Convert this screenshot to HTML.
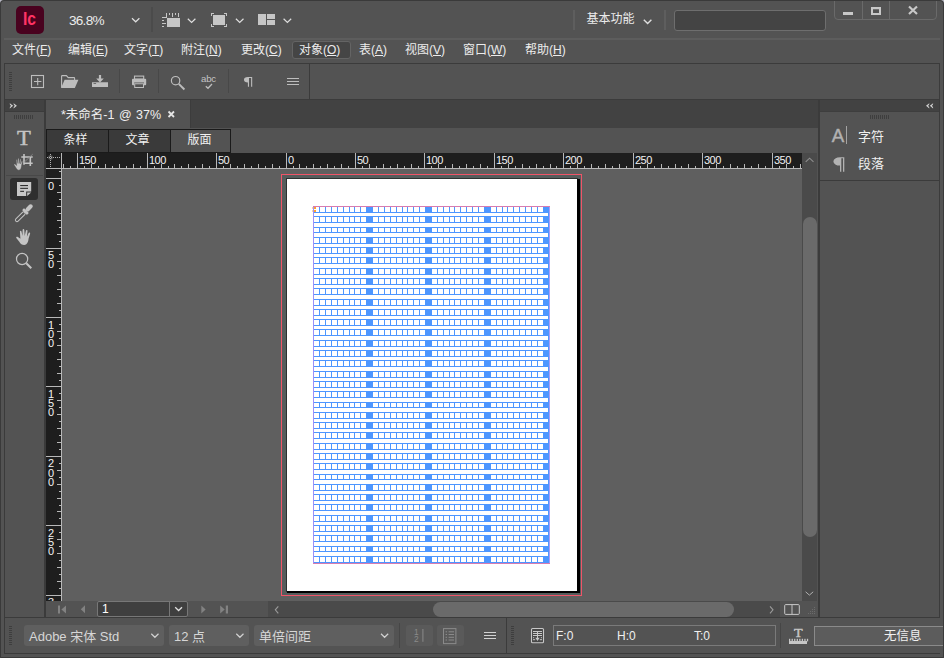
<!DOCTYPE html>
<html lang="zh-CN">
<head>
<meta charset="utf-8">
<title>Adobe InCopy</title>
<style>
*{box-sizing:border-box;margin:0;padding:0}
html,body{width:944px;height:658px;overflow:hidden;background:#b8b8c4}
body{font-family:"Liberation Sans","Noto Sans CJK SC",sans-serif;font-size:12px;color:#e6e6e6;position:relative}
.a{position:absolute}
#win{position:absolute;left:0;top:0;width:944px;height:658px;background:#535353;overflow:hidden;border-radius:4px 4px 0 0}
.ln{position:absolute;background:#3b3b3b}
.mi{position:absolute;top:41px;height:18px;line-height:18px;font-size:12px;color:#ececec;white-space:nowrap}
.mi u{text-decoration:underline;text-underline-offset:1px}
svg{position:absolute;overflow:visible}
.dd{position:absolute;top:625px;height:21px;background:#5f5f5f;border-radius:3px;color:#d6d6d6;line-height:23px;font-size:13px;white-space:nowrap;overflow:hidden}
.vt{position:absolute;top:130px;height:22px;line-height:20px;text-align:center;font-size:12px;color:#f0f0f0;text-indent:-2px}
.rl{position:absolute;font-size:11px;line-height:11px;color:#f2f2f2;letter-spacing:-0.55px}
.vl{position:absolute;left:47px;width:8px;font-size:11px;line-height:8px;color:#f2f2f2;text-align:center}
</style>
</head>
<body>
<div id="win">

<!-- ===== title bar ===== -->
<div class="a" id="logo" style="left:16px;top:6px;width:28px;height:28px;border-radius:5px;background:#49021f"></div>
<div class="a" style="left:22.7px;top:7px;width:20px;height:24px;line-height:24px;font-size:19px;font-weight:bold;color:#ff3366;letter-spacing:-0.2px;transform:scaleX(.82);transform-origin:0 0">Ic</div>
<div class="a" style="left:69px;top:12.5px;font-size:13.6px;line-height:16px;color:#ececec;letter-spacing:-0.75px">36.8%</div>
<div class="ln" style="left:151px;top:7px;width:2px;height:25px;background:#4b4b4b"></div>
<div class="ln" style="left:573px;top:10px;width:2px;height:20px;background:#5e5e5e"></div>
<div class="a" style="left:586.5px;top:10px;font-size:12px;line-height:18px;color:#ececec">基本功能</div>
<div class="ln" style="left:664px;top:10px;width:2px;height:20px;background:#5e5e5e"></div>
<div class="a" style="left:674px;top:10px;width:152px;height:21px;border:1px solid #6e6e6e;border-radius:3px;background:#444"></div>
<div class="a" style="left:834px;top:-2px;width:103px;height:22px;border:1px solid #6a6a6a;border-radius:0 0 4px 4px"></div>
<div class="ln" style="left:862px;top:0;width:1px;height:19px;background:#6a6a6a"></div>
<div class="ln" style="left:889px;top:0;width:1px;height:19px;background:#6a6a6a"></div>


<!-- title bar icons -->
<svg class="a" style="left:0;top:0" width="944" height="40" viewBox="0 0 944 40">
<g fill="none" stroke="#dedede" stroke-width="1.2">
<path d="M132 18.3l3.7 3.5 3.7-3.5"/>
<path d="M187.8 18.8l3.8 3.6 3.8-3.6"/>
<path d="M235.9 18.8l3.8 3.6 3.8-3.6"/>
<path d="M283.6 18.8l3.8 3.6 3.8-3.6"/>
<path d="M643.8 19.8l3.8 3.8 3.8-3.8" stroke-width="1.4"/>
</g>
<g fill="#c6c6c6">
<rect x="167" y="18" width="13" height="9"/>
<rect x="162" y="17" width="5" height="1"/><rect x="166" y="13" width="1" height="4"/>
<rect x="169" y="13" width="1" height="2"/><rect x="172" y="13" width="1" height="4"/><rect x="175" y="13" width="1" height="2"/><rect x="178" y="13" width="1" height="4"/>
<rect x="162" y="20" width="2" height="1"/><rect x="162" y="23" width="4" height="1"/><rect x="162" y="26" width="2" height="1"/>
<rect x="213" y="15" width="12" height="10"/>
<path d="M211 16v-3h3v1h-2v2zM224 13h3v3h-1v-2h-2zM211 24h1v2h2v1h-3zM226 24h1v3h-3v-1h2z"/>
<rect x="258" y="14" width="8" height="11"/><rect x="267" y="14" width="8" height="5"/><rect x="267" y="20" width="8" height="5"/>
</g>
<!-- window buttons -->
<g fill="#c8c8c8">
<rect x="843" y="12" width="10" height="3"/>
<path d="M871 7h10v8h-10zM873 9.2v3.8h6v-3.8z" fill-rule="evenodd"/>
</g>
<path d="M909 6.5l8 7.5M917 6.5l-8 7.5" stroke="#c8c8c8" stroke-width="2.2" fill="none"/>
</svg>

<!-- separator under title -->
<div class="ln" style="left:4px;top:38px;width:936px;height:2px;background:#5d5d5d"></div>

<!-- ===== menu bar ===== -->
<div class="a" style="left:292px;top:41px;width:59px;height:18px;background:#454545;border:1px solid #646464;border-radius:3px"></div>
<div class="mi" style="left:12px">文件(<u>F</u>)</div>
<div class="mi" style="left:68px">编辑(<u>E</u>)</div>
<div class="mi" style="left:124px">文字(<u>T</u>)</div>
<div class="mi" style="left:181px">附注(<u>N</u>)</div>
<div class="mi" style="left:241px">更改(<u>C</u>)</div>
<div class="mi" style="left:299px">对象(<u>O</u>)</div>
<div class="mi" style="left:359px">表(<u>A</u>)</div>
<div class="mi" style="left:405px">视图(<u>V</u>)</div>
<div class="mi" style="left:463px">窗口(<u>W</u>)</div>
<div class="mi" style="left:525px">帮助(<u>H</u>)</div>

<!-- ===== toolbar ===== -->
<div class="a" style="left:4px;top:63px;width:936px;height:37px;border:1px solid #3b3b3b"></div>
<div class="ln" style="left:309px;top:64px;width:1px;height:35px"></div>
<div class="ln" style="left:119px;top:69px;width:1px;height:24px;background:#484848"></div>
<div class="ln" style="left:158px;top:69px;width:1px;height:24px;background:#484848"></div>
<div class="ln" style="left:228px;top:69px;width:1px;height:24px;background:#484848"></div>


<!-- toolbar icons -->
<svg class="a" style="left:0;top:60px" width="320" height="40" viewBox="0 60 320 40">
<g fill="#3e3e3e"><rect x="9" y="72" width="3" height="1"/><rect x="9" y="74" width="3" height="1"/><rect x="9" y="76" width="3" height="1"/><rect x="9" y="78" width="3" height="1"/><rect x="9" y="80" width="3" height="1"/><rect x="9" y="82" width="3" height="1"/><rect x="9" y="84" width="3" height="1"/><rect x="9" y="86" width="3" height="1"/><rect x="9" y="88" width="3" height="1"/><rect x="9" y="90" width="3" height="1"/></g>
<g fill="none" stroke="#bdbdbd" stroke-width="1.1">
<rect x="31.5" y="75.5" width="12" height="12"/>
<path d="M34 81.5h7.4M37.7 78v7.2"/>
<path d="M61.6 87.5V76.2q0-.6.6-.6h4.2l1.8 2h5.8q.6 0 .6.6v2"/>
<rect x="134.5" y="76.1" width="9.2" height="3"/>
<circle cx="175.6" cy="80.7" r="4.2" stroke-width="1.2"/>
<path d="M178.8 83.9l5.6 5.6" stroke-width="1.9"/>
<path d="M205.8 86.2l2.2 2.1 4-4.3" stroke-width="1.3"/>
</g>
<g fill="#bdbdbd">
<path d="M64.6 79.8h13.8l-3.6 8.2H61z"/>
<path d="M98.9 75h2.2v3.6h2.7l-3.8 3.9-3.8-3.9h2.7z"/>
<path d="M92 82.2h16v4.9H92zM93.5 83.2v.8h2.6v-.8z" fill-rule="evenodd"/>
<path d="M133 78.8h12.2q1 0 1 1v4.4q0 1-1 1h-1.2v-2.7h-9.8v2.7H133q-1 0-1-1v-4.4q0-1 1-1z"/>
<path d="M134.2 83.2h9.8v4.8h-9.8zM135.2 84.2v2.8h7.8v-2.8z" fill-rule="evenodd"/>
<path d="M247.9 77h4.3v9.8h-1.1v-8.8h-2.1v8.8h-1.1v-4.3a3.9 2.75 0 010-5.5z"/>
<rect x="287" y="78" width="12" height="1"/><rect x="287" y="81" width="12" height="1"/><rect x="287" y="84" width="12" height="1"/>
</g>
<text x="201" y="81.8" font-size="9.6" fill="#c4c4c4" font-family="Liberation Sans,sans-serif" letter-spacing="-0.2">abc</text>
</svg>

<!-- ===== left tools ===== -->
<div class="ln" style="left:4px;top:99px;width:1px;height:519px"></div>
<div class="a" style="left:5px;top:100px;width:39px;height:11px;background:#424242"></div>
<div class="ln" style="left:5px;top:111px;width:39px;height:1px"></div>
<div class="ln" style="left:44px;top:99px;width:2px;height:519px;background:#3b3b3b"></div>
<div class="ln" style="left:6px;top:175px;width:37px;height:1px;background:#484848"></div>
<div class="a" style="left:10px;top:178px;width:28px;height:22px;border-radius:3px;background:#2f2f2f"></div>


<!-- tool icons -->
<svg class="a" style="left:0;top:99px" width="46" height="180" viewBox="0 99 46 180">
<g fill="#3e3e3e"><rect x="14" y="115" width="1" height="4"/><rect x="16" y="115" width="1" height="4"/><rect x="18" y="115" width="1" height="4"/><rect x="20" y="115" width="1" height="4"/><rect x="22" y="115" width="1" height="4"/><rect x="24" y="115" width="1" height="4"/><rect x="26" y="115" width="1" height="4"/><rect x="28" y="115" width="1" height="4"/><rect x="30" y="115" width="1" height="4"/><rect x="32" y="115" width="1" height="4"/></g>
<path d="M9.8 103.2l3.3 2.6-3.3 2.6v-1l1.1-1.6-1.1-1.6zM13.6 103.2l3.3 2.6-3.3 2.6v-1l1.1-1.6-1.1-1.6z" fill="#d0d0d0"/>
<text x="0" y="0" transform="translate(16.9 144.9) scale(1.1 1)" font-family="Liberation Serif,serif" font-size="20.6" fill="#c4c4c4" stroke="#c4c4c4" stroke-width="0.45">T</text>
<!-- crop + hand -->
<g fill="none" stroke="#c4c4c4" stroke-width="1.6">
<path d="M24 154v10.7M21.3 157h11.4M30.3 156.2v9.8M23.2 163.3h9.5"/>
</g>
<path d="M32.7 154.2l-8.5 8" stroke="#8a8a8a" stroke-width="0.9" fill="none"/>
<g transform="translate(14 158.3) scale(0.6 0.74)"><path d="M8.2 16c-2.3 0-3.6-1.2-4.9-3.3L.3 8.9c-.5-.8.4-1.6 1.2-1.1l2.9 2L3.9 2.6c-.1-1.1 1.3-1.3 1.6-.2l1 4.6.1-6c0-1.2 1.6-1.2 1.7 0l.4 6 1.2-5.2c.3-1.1 1.7-.8 1.6.3l-.6 5.6 1.7-3.6c.5-1 1.8-.5 1.5.6l-1.5 4.8c-.3 3.5-1.6 6.5-4.4 6.5z" fill="#c4c4c4" stroke="#535353" stroke-width="0.6"/></g>
<!-- note -->
<path d="M17 182h14.2v9.6h-5v4.5H17z" fill="#c8c8c8"/>
<path d="M27.2 192.6h3.9l-3.9 3.5z" fill="#c8c8c8"/>
<g fill="#303030"><rect x="20.2" y="185" width="7.8" height="1.1"/><rect x="20.2" y="187.8" width="7.8" height="1.1"/><rect x="20.2" y="190.8" width="3.8" height="1.1"/></g>
<!-- eyedropper -->
<g transform="rotate(45 24 213)">
<rect x="22.4" y="212" width="3.2" height="12.5" rx="1.6" fill="none" stroke="#c4c4c4" stroke-width="1"/>
<rect x="20.6" y="209.6" width="6.8" height="2.7" rx="0.6" fill="#c4c4c4"/>
<rect x="21.9" y="201.5" width="4.2" height="8.5" rx="2.1" fill="#c4c4c4"/>
</g>
<!-- hand -->
<g transform="translate(16 229)"><path d="M8.2 16c-2.3 0-3.6-1.2-4.9-3.3L.3 8.9c-.5-.8.4-1.6 1.2-1.1l2.9 2L3.9 2.6c-.1-1.1 1.3-1.3 1.6-.2l1 4.6.1-6c0-1.2 1.6-1.2 1.7 0l.4 6 1.2-5.2c.3-1.1 1.7-.8 1.6.3l-.6 5.6 1.7-3.6c.5-1 1.8-.5 1.5.6l-1.5 4.8c-.3 3.5-1.6 6.5-4.4 6.5z" fill="#c4c4c4"/></g>
<!-- zoom -->
<circle cx="22.1" cy="259" r="5.6" fill="none" stroke="#c4c4c4" stroke-width="1.2"/>
<path d="M26.3 263.2l5 5" stroke="#c4c4c4" stroke-width="2" fill="none"/>
</svg>

<!-- ===== document area ===== -->
<div class="a" style="left:46px;top:100px;width:772px;height:29px;background:#424242"></div>
<div class="a" style="left:46px;top:100px;width:144px;height:28px;background:#535353"></div>
<div class="ln" style="left:190px;top:100px;width:1px;height:28px;background:#3c3c3c"></div>
<div class="a" style="left:61px;top:106px;font-size:12.5px;line-height:18px;color:#f0f0f0;white-space:nowrap;word-spacing:1px">*未命名-1 @ 37%</div>
<svg class="a" style="left:166px;top:108px" width="12" height="12" viewBox="166 108 12 12"><path d="M168.5 111.5l5.5 5.5M174 111.5l-5.5 5.5" stroke="#e4e4e4" stroke-width="1.8" fill="none"/></svg>
<div class="a" style="left:46px;top:128px;width:772px;height:25px;background:#535353"></div>
<div class="a" style="left:46px;top:129px;width:185px;height:24px;background:#1a1a1a"></div>
<div class="vt" style="left:47px;width:61px;background:#3a3a3a;text-indent:-4px">条样</div>
<div class="vt" style="left:109px;width:61px;background:#3a3a3a;text-indent:-4px">文章</div>
<div class="vt" style="left:171px;width:59px;background:#535353">版面</div>

<!-- rulers + pasteboard -->
<div class="a" style="left:46px;top:153px;width:756px;height:16px;background:#1e1e1e"></div>
<div class="a" style="left:46px;top:168px;width:16px;height:433px;background:#1e1e1e"></div>
<div class="a" id="paste" style="left:62px;top:169px;width:740px;height:432px;background:#5f5f5f"></div>
<div class="a" style="left:802px;top:153px;width:15px;height:448px;background:#4a4a4a"></div>
<div class="a" style="left:803px;top:217px;width:14px;height:320px;background:#6a6a6a;border-radius:7px"></div>
<div class="ln" style="left:818px;top:99px;width:2px;height:519px"></div>

<!-- page -->
<div class="a" style="left:281px;top:174px;width:301px;height:422px;border:1px solid #ef5468;background:#565c5c"></div>
<div class="a" style="left:286px;top:178px;width:292px;height:414px;background:#2b3030"></div>
<div class="a" style="left:287px;top:179px;width:293px;height:414px;background:#000"></div>
<div class="a" style="left:287px;top:179px;width:290.3px;height:412px;background:#fff"></div>

<svg class="a" style="left:0;top:0" width="944" height="658" viewBox="0 0 944 658"><g fill="#b8b8b8"><rect x="63" y="164" width="1" height="4"/><rect x="70" y="166" width="1" height="2"/><rect x="77" y="153" width="1" height="15"/><rect x="84" y="166" width="1" height="2"/><rect x="91" y="164" width="1" height="4"/><rect x="98" y="166" width="1" height="2"/><rect x="105" y="164" width="1" height="4"/><rect x="112" y="166" width="1" height="2"/><rect x="119" y="164" width="1" height="4"/><rect x="126" y="166" width="1" height="2"/><rect x="133" y="164" width="1" height="4"/><rect x="140" y="166" width="1" height="2"/><rect x="147" y="153" width="1" height="15"/><rect x="154" y="166" width="1" height="2"/><rect x="161" y="164" width="1" height="4"/><rect x="168" y="166" width="1" height="2"/><rect x="174" y="164" width="1" height="4"/><rect x="181" y="166" width="1" height="2"/><rect x="188" y="164" width="1" height="4"/><rect x="195" y="166" width="1" height="2"/><rect x="202" y="164" width="1" height="4"/><rect x="209" y="166" width="1" height="2"/><rect x="216" y="153" width="1" height="15"/><rect x="223" y="166" width="1" height="2"/><rect x="230" y="164" width="1" height="4"/><rect x="237" y="166" width="1" height="2"/><rect x="244" y="164" width="1" height="4"/><rect x="251" y="166" width="1" height="2"/><rect x="258" y="164" width="1" height="4"/><rect x="265" y="166" width="1" height="2"/><rect x="272" y="164" width="1" height="4"/><rect x="279" y="166" width="1" height="2"/><rect x="286" y="153" width="1" height="15"/><rect x="293" y="166" width="1" height="2"/><rect x="299" y="164" width="1" height="4"/><rect x="306" y="166" width="1" height="2"/><rect x="313" y="164" width="1" height="4"/><rect x="320" y="166" width="1" height="2"/><rect x="327" y="164" width="1" height="4"/><rect x="334" y="166" width="1" height="2"/><rect x="341" y="164" width="1" height="4"/><rect x="348" y="166" width="1" height="2"/><rect x="355" y="153" width="1" height="15"/><rect x="362" y="166" width="1" height="2"/><rect x="369" y="164" width="1" height="4"/><rect x="376" y="166" width="1" height="2"/><rect x="383" y="164" width="1" height="4"/><rect x="390" y="166" width="1" height="2"/><rect x="397" y="164" width="1" height="4"/><rect x="404" y="166" width="1" height="2"/><rect x="411" y="164" width="1" height="4"/><rect x="418" y="166" width="1" height="2"/><rect x="424" y="153" width="1" height="15"/><rect x="431" y="166" width="1" height="2"/><rect x="438" y="164" width="1" height="4"/><rect x="445" y="166" width="1" height="2"/><rect x="452" y="164" width="1" height="4"/><rect x="459" y="166" width="1" height="2"/><rect x="466" y="164" width="1" height="4"/><rect x="473" y="166" width="1" height="2"/><rect x="480" y="164" width="1" height="4"/><rect x="487" y="166" width="1" height="2"/><rect x="494" y="153" width="1" height="15"/><rect x="501" y="166" width="1" height="2"/><rect x="508" y="164" width="1" height="4"/><rect x="515" y="166" width="1" height="2"/><rect x="522" y="164" width="1" height="4"/><rect x="529" y="166" width="1" height="2"/><rect x="536" y="164" width="1" height="4"/><rect x="543" y="166" width="1" height="2"/><rect x="550" y="164" width="1" height="4"/><rect x="556" y="166" width="1" height="2"/><rect x="563" y="153" width="1" height="15"/><rect x="570" y="166" width="1" height="2"/><rect x="577" y="164" width="1" height="4"/><rect x="584" y="166" width="1" height="2"/><rect x="591" y="164" width="1" height="4"/><rect x="598" y="166" width="1" height="2"/><rect x="605" y="164" width="1" height="4"/><rect x="612" y="166" width="1" height="2"/><rect x="619" y="164" width="1" height="4"/><rect x="626" y="166" width="1" height="2"/><rect x="633" y="153" width="1" height="15"/><rect x="640" y="166" width="1" height="2"/><rect x="647" y="164" width="1" height="4"/><rect x="654" y="166" width="1" height="2"/><rect x="661" y="164" width="1" height="4"/><rect x="668" y="166" width="1" height="2"/><rect x="675" y="164" width="1" height="4"/><rect x="681" y="166" width="1" height="2"/><rect x="688" y="164" width="1" height="4"/><rect x="695" y="166" width="1" height="2"/><rect x="702" y="153" width="1" height="15"/><rect x="709" y="166" width="1" height="2"/><rect x="716" y="164" width="1" height="4"/><rect x="723" y="166" width="1" height="2"/><rect x="730" y="164" width="1" height="4"/><rect x="737" y="166" width="1" height="2"/><rect x="744" y="164" width="1" height="4"/><rect x="751" y="166" width="1" height="2"/><rect x="758" y="164" width="1" height="4"/><rect x="765" y="166" width="1" height="2"/><rect x="772" y="153" width="1" height="15"/><rect x="779" y="166" width="1" height="2"/><rect x="786" y="164" width="1" height="4"/><rect x="793" y="166" width="1" height="2"/><rect x="800" y="164" width="1" height="4"/><rect x="59" y="171" width="2" height="1"/><rect x="46" y="178" width="15" height="1"/><rect x="59" y="185" width="2" height="1"/><rect x="57" y="192" width="4" height="1"/><rect x="59" y="199" width="2" height="1"/><rect x="57" y="206" width="4" height="1"/><rect x="59" y="213" width="2" height="1"/><rect x="57" y="220" width="4" height="1"/><rect x="59" y="227" width="2" height="1"/><rect x="57" y="234" width="4" height="1"/><rect x="59" y="241" width="2" height="1"/><rect x="46" y="248" width="15" height="1"/><rect x="59" y="254" width="2" height="1"/><rect x="57" y="261" width="4" height="1"/><rect x="59" y="268" width="2" height="1"/><rect x="57" y="275" width="4" height="1"/><rect x="59" y="282" width="2" height="1"/><rect x="57" y="289" width="4" height="1"/><rect x="59" y="296" width="2" height="1"/><rect x="57" y="303" width="4" height="1"/><rect x="59" y="310" width="2" height="1"/><rect x="46" y="317" width="15" height="1"/><rect x="59" y="324" width="2" height="1"/><rect x="57" y="331" width="4" height="1"/><rect x="59" y="338" width="2" height="1"/><rect x="57" y="345" width="4" height="1"/><rect x="59" y="352" width="2" height="1"/><rect x="57" y="359" width="4" height="1"/><rect x="59" y="366" width="2" height="1"/><rect x="57" y="373" width="4" height="1"/><rect x="59" y="380" width="2" height="1"/><rect x="46" y="386" width="15" height="1"/><rect x="59" y="393" width="2" height="1"/><rect x="57" y="400" width="4" height="1"/><rect x="59" y="407" width="2" height="1"/><rect x="57" y="414" width="4" height="1"/><rect x="59" y="421" width="2" height="1"/><rect x="57" y="428" width="4" height="1"/><rect x="59" y="435" width="2" height="1"/><rect x="57" y="442" width="4" height="1"/><rect x="59" y="449" width="2" height="1"/><rect x="46" y="456" width="15" height="1"/><rect x="59" y="463" width="2" height="1"/><rect x="57" y="470" width="4" height="1"/><rect x="59" y="477" width="2" height="1"/><rect x="57" y="484" width="4" height="1"/><rect x="59" y="491" width="2" height="1"/><rect x="57" y="498" width="4" height="1"/><rect x="59" y="505" width="2" height="1"/><rect x="57" y="511" width="4" height="1"/><rect x="59" y="518" width="2" height="1"/><rect x="46" y="525" width="15" height="1"/><rect x="59" y="532" width="2" height="1"/><rect x="57" y="539" width="4" height="1"/><rect x="59" y="546" width="2" height="1"/><rect x="57" y="553" width="4" height="1"/><rect x="59" y="560" width="2" height="1"/><rect x="57" y="567" width="4" height="1"/><rect x="59" y="574" width="2" height="1"/><rect x="57" y="581" width="4" height="1"/><rect x="59" y="588" width="2" height="1"/><rect x="46" y="595" width="15" height="1"/><rect x="61" y="153" width="1" height="448"/><rect x="46" y="168" width="756" height="1"/></g><g fill="#b0b0b0"><rect x="47" y="157" width="1" height="1"/><rect x="49" y="157" width="1" height="1"/><rect x="51" y="157" width="1" height="1"/><rect x="53" y="157" width="1" height="1"/><rect x="55" y="157" width="1" height="1"/><rect x="57" y="157" width="1" height="1"/><rect x="59" y="157" width="1" height="1"/><rect x="50" y="154" width="1" height="1"/><rect x="50" y="156" width="1" height="1"/><rect x="50" y="158" width="1" height="1"/><rect x="50" y="160" width="1" height="1"/><rect x="50" y="162" width="1" height="1"/><rect x="50" y="164" width="1" height="1"/><rect x="50" y="166" width="1" height="1"/><rect x="49" y="156" width="3" height="3" fill="none" stroke="#aaa" stroke-width="0.5"/></g></svg>
<div class="rl" style="left:79px;top:155px">150</div>
<div class="rl" style="left:149px;top:155px">100</div>
<div class="rl" style="left:218px;top:155px">50</div>
<div class="rl" style="left:288px;top:155px">0</div>
<div class="rl" style="left:357px;top:155px">50</div>
<div class="rl" style="left:426px;top:155px">100</div>
<div class="rl" style="left:496px;top:155px">150</div>
<div class="rl" style="left:565px;top:155px">200</div>
<div class="rl" style="left:635px;top:155px">250</div>
<div class="rl" style="left:704px;top:155px">300</div>
<div class="rl" style="left:774px;top:155px">350</div>
<div class="vl" style="top:181.6px">0</div>
<div class="vl" style="top:251.1px">5</div>
<div class="vl" style="top:260.2px">0</div>
<div class="vl" style="top:320.5px">1</div>
<div class="vl" style="top:329.7px">0</div>
<div class="vl" style="top:338.9px">0</div>
<div class="vl" style="top:390.0px">1</div>
<div class="vl" style="top:399.2px">5</div>
<div class="vl" style="top:408.4px">0</div>
<div class="vl" style="top:459.4px">2</div>
<div class="vl" style="top:468.6px">0</div>
<div class="vl" style="top:477.8px">0</div>
<div class="vl" style="top:528.9px">2</div>
<div class="vl" style="top:538.1px">5</div>
<div class="vl" style="top:547.2px">0</div>
<div class="vl" style="top:598.3px">3</div>
<svg class="a" style="left:0;top:0" width="944" height="658" viewBox="0 0 944 658" shape-rendering="crispEdges"><g fill="#4d96ff"><rect x="313" y="206" width="237" height="7"/><rect x="313" y="216" width="237" height="7"/><rect x="313" y="227" width="237" height="6"/><rect x="313" y="237" width="237" height="7"/><rect x="313" y="247" width="237" height="7"/><rect x="313" y="257" width="237" height="7"/><rect x="313" y="268" width="237" height="7"/><rect x="313" y="278" width="237" height="7"/><rect x="313" y="288" width="237" height="7"/><rect x="313" y="299" width="237" height="7"/><rect x="313" y="309" width="237" height="7"/><rect x="313" y="319" width="237" height="7"/><rect x="313" y="329" width="237" height="7"/><rect x="313" y="340" width="237" height="7"/><rect x="313" y="350" width="237" height="7"/><rect x="313" y="360" width="237" height="7"/><rect x="313" y="371" width="237" height="7"/><rect x="313" y="381" width="237" height="7"/><rect x="313" y="391" width="237" height="7"/><rect x="313" y="402" width="237" height="6"/><rect x="313" y="412" width="237" height="7"/><rect x="313" y="422" width="237" height="7"/><rect x="313" y="432" width="237" height="7"/><rect x="313" y="443" width="237" height="7"/><rect x="313" y="453" width="237" height="7"/><rect x="313" y="463" width="237" height="7"/><rect x="313" y="474" width="237" height="6"/><rect x="313" y="484" width="237" height="7"/><rect x="313" y="494" width="237" height="7"/><rect x="313" y="504" width="237" height="7"/><rect x="313" y="515" width="237" height="7"/><rect x="313" y="525" width="237" height="7"/><rect x="313" y="535" width="237" height="7"/><rect x="313" y="546" width="237" height="6"/><rect x="313" y="556" width="237" height="7"/></g><g fill="#fff"><rect x="314" y="206" width="5" height="357"/><rect x="320" y="206" width="5" height="357"/><rect x="326" y="206" width="5" height="357"/><rect x="332" y="206" width="5" height="357"/><rect x="338" y="206" width="5" height="357"/><rect x="344" y="206" width="5" height="357"/><rect x="350" y="206" width="4" height="357"/><rect x="355" y="206" width="5" height="357"/><rect x="361" y="206" width="5" height="357"/><rect x="373" y="206" width="5" height="357"/><rect x="379" y="206" width="5" height="357"/><rect x="385" y="206" width="5" height="357"/><rect x="391" y="206" width="5" height="357"/><rect x="397" y="206" width="5" height="357"/><rect x="403" y="206" width="4" height="357"/><rect x="408" y="206" width="5" height="357"/><rect x="414" y="206" width="5" height="357"/><rect x="420" y="206" width="5" height="357"/><rect x="432" y="206" width="5" height="357"/><rect x="438" y="206" width="5" height="357"/><rect x="444" y="206" width="5" height="357"/><rect x="450" y="206" width="4" height="357"/><rect x="455" y="206" width="5" height="357"/><rect x="461" y="206" width="5" height="357"/><rect x="467" y="206" width="5" height="357"/><rect x="473" y="206" width="5" height="357"/><rect x="479" y="206" width="5" height="357"/><rect x="491" y="206" width="5" height="357"/><rect x="497" y="206" width="5" height="357"/><rect x="503" y="206" width="4" height="357"/><rect x="508" y="206" width="5" height="357"/><rect x="514" y="206" width="5" height="357"/><rect x="520" y="206" width="5" height="357"/><rect x="526" y="206" width="5" height="357"/><rect x="532" y="206" width="5" height="357"/><rect x="538" y="206" width="5" height="357"/></g><g fill="#4d96ff"><rect x="313" y="206" width="237" height="1"/><rect x="313" y="212" width="237" height="1"/><rect x="313" y="216" width="237" height="1"/><rect x="313" y="222" width="237" height="1"/><rect x="313" y="227" width="237" height="1"/><rect x="313" y="232" width="237" height="1"/><rect x="313" y="237" width="237" height="1"/><rect x="313" y="243" width="237" height="1"/><rect x="313" y="247" width="237" height="1"/><rect x="313" y="253" width="237" height="1"/><rect x="313" y="257" width="237" height="1"/><rect x="313" y="263" width="237" height="1"/><rect x="313" y="268" width="237" height="1"/><rect x="313" y="274" width="237" height="1"/><rect x="313" y="278" width="237" height="1"/><rect x="313" y="284" width="237" height="1"/><rect x="313" y="288" width="237" height="1"/><rect x="313" y="294" width="237" height="1"/><rect x="313" y="299" width="237" height="1"/><rect x="313" y="305" width="237" height="1"/><rect x="313" y="309" width="237" height="1"/><rect x="313" y="315" width="237" height="1"/><rect x="313" y="319" width="237" height="1"/><rect x="313" y="325" width="237" height="1"/><rect x="313" y="329" width="237" height="1"/><rect x="313" y="335" width="237" height="1"/><rect x="313" y="340" width="237" height="1"/><rect x="313" y="346" width="237" height="1"/><rect x="313" y="350" width="237" height="1"/><rect x="313" y="356" width="237" height="1"/><rect x="313" y="360" width="237" height="1"/><rect x="313" y="366" width="237" height="1"/><rect x="313" y="371" width="237" height="1"/><rect x="313" y="377" width="237" height="1"/><rect x="313" y="381" width="237" height="1"/><rect x="313" y="387" width="237" height="1"/><rect x="313" y="391" width="237" height="1"/><rect x="313" y="397" width="237" height="1"/><rect x="313" y="402" width="237" height="1"/><rect x="313" y="407" width="237" height="1"/><rect x="313" y="412" width="237" height="1"/><rect x="313" y="418" width="237" height="1"/><rect x="313" y="422" width="237" height="1"/><rect x="313" y="428" width="237" height="1"/><rect x="313" y="432" width="237" height="1"/><rect x="313" y="438" width="237" height="1"/><rect x="313" y="443" width="237" height="1"/><rect x="313" y="449" width="237" height="1"/><rect x="313" y="453" width="237" height="1"/><rect x="313" y="459" width="237" height="1"/><rect x="313" y="463" width="237" height="1"/><rect x="313" y="469" width="237" height="1"/><rect x="313" y="474" width="237" height="1"/><rect x="313" y="479" width="237" height="1"/><rect x="313" y="484" width="237" height="1"/><rect x="313" y="490" width="237" height="1"/><rect x="313" y="494" width="237" height="1"/><rect x="313" y="500" width="237" height="1"/><rect x="313" y="504" width="237" height="1"/><rect x="313" y="510" width="237" height="1"/><rect x="313" y="515" width="237" height="1"/><rect x="313" y="521" width="237" height="1"/><rect x="313" y="525" width="237" height="1"/><rect x="313" y="531" width="237" height="1"/><rect x="313" y="535" width="237" height="1"/><rect x="313" y="541" width="237" height="1"/><rect x="313" y="546" width="237" height="1"/><rect x="313" y="551" width="237" height="1"/><rect x="313" y="556" width="237" height="1"/><rect x="313" y="562" width="237" height="1"/></g><rect x="548" y="206" width="1" height="357" fill="#4d96ff"/><rect x="313" y="206" width="1" height="358" fill="#9b90f8"/><rect x="549" y="206" width="1" height="358" fill="#a99cf8"/><rect x="313" y="206" width="237" height="1" fill="#d87cb0"/><rect x="313" y="563" width="237" height="1" fill="#d87cb0"/><g fill="#ffa030"><rect x="314" y="207" width="1.6" height="2"/><rect x="314" y="210" width="1.6" height="2"/></g><g fill="#ffd6a0"><rect x="312" y="207" width="1" height="2"/><rect x="312" y="210" width="1" height="2"/></g></svg>

<!-- bottom status row -->
<div class="a" style="left:46px;top:601px;width:222px;height:16px;background:#535353"></div>
<div class="a" style="left:97px;top:601px;width:91px;height:16px;background:#3f3f3f;border:1px solid #777;border-radius:2px"></div>
<div class="ln" style="left:169px;top:602px;width:1px;height:14px;background:#777"></div>
<div class="a" style="left:102px;top:602px;font-size:12px;line-height:14px;color:#fff">1</div>
<div class="a" style="left:268px;top:601px;width:512px;height:16px;background:#4a4a4a"></div>
<div class="a" style="left:433px;top:602px;width:301px;height:15px;background:#6a6a6a;border-radius:7.5px"></div>
<div class="a" style="left:780px;top:601px;width:38px;height:16px;background:#535353"></div>
<div class="ln" style="left:4px;top:617px;width:936px;height:1px"></div>


<!-- status row icons -->
<svg class="a" style="left:46px;top:601px" width="772" height="16" viewBox="46 601 772 16">
<g fill="#828282">
<rect x="58" y="605.5" width="2" height="8"/><path d="M66 605.5v8l-4.6-4z"/>
<path d="M85 605.3v8l-4.2-4z"/>
<path d="M201.3 605.5v8l4.3-4z"/>
<path d="M220.2 605.5v8l4.5-4z"/><rect x="225.8" y="605.5" width="2.2" height="8"/>
</g>
<path d="M175.2 607.2l3.4 3.3 3.4-3.3" fill="none" stroke="#e0e0e0" stroke-width="1.3"/>
<path d="M278.3 606.3l-3 3.5 3 3.5M770 606.3l3 3.5-3 3.5" fill="none" stroke="#9a9a9a" stroke-width="1.1"/>
<rect x="784.7" y="604.6" width="14.6" height="9.8" rx="1" fill="none" stroke="#c8c8c8" stroke-width="1"/><rect x="791.5" y="604.6" width="1" height="9.8" fill="#c4c4c4"/>
<g fill="#6c6c6c"><rect x="814" y="607" width="1" height="1"/><rect x="812" y="609" width="1" height="1"/><rect x="814" y="609" width="1" height="1"/><rect x="810" y="611" width="1" height="1"/><rect x="812" y="611" width="1" height="1"/><rect x="814" y="611" width="1" height="1"/><rect x="808" y="613" width="1" height="1"/><rect x="810" y="613" width="1" height="1"/><rect x="812" y="613" width="1" height="1"/><rect x="814" y="613" width="1" height="1"/></g>
</svg>
<svg class="a" style="left:800px;top:153px" width="20" height="20" viewBox="800 153 20 20"><path d="M805.7 161.8l3.9-3.6 3.9 3.6" fill="none" stroke="#8e8e8e" stroke-width="1.1"/></svg>
<svg class="a" style="left:800px;top:585px" width="20" height="16" viewBox="800 585 20 16"><path d="M805.6 591.8l3.8 3.3 3.8-3.3" fill="none" stroke="#b0b0b0" stroke-width="1"/></svg>


<!-- ===== right panel ===== -->
<div class="a" style="left:820px;top:100px;width:120px;height:11px;background:#424242"></div>
<div class="ln" style="left:820px;top:111px;width:120px;height:1px;background:#3e3e3e"></div>
<div class="ln" style="left:820px;top:180px;width:120px;height:1px"></div>
<div class="ln" style="left:939px;top:63px;width:1px;height:555px"></div>
<div class="a" style="left:858px;top:128px;font-size:13px;line-height:18px;color:#f0f0f0">字符</div>
<div class="a" style="left:858px;top:155px;font-size:13px;line-height:18px;color:#f0f0f0">段落</div>


<svg class="a" style="left:820px;top:99px" width="120" height="90" viewBox="820 99 120 90">
<g fill="#3e3e3e"><rect x="870" y="115" width="1" height="4"/><rect x="872" y="115" width="1" height="4"/><rect x="874" y="115" width="1" height="4"/><rect x="876" y="115" width="1" height="4"/><rect x="878" y="115" width="1" height="4"/><rect x="880" y="115" width="1" height="4"/><rect x="882" y="115" width="1" height="4"/><rect x="884" y="115" width="1" height="4"/><rect x="886" y="115" width="1" height="4"/><rect x="888" y="115" width="1" height="4"/></g>
<path d="M929.3 103.2l-3.3 2.6 3.3 2.6v-1l-1.1-1.6 1.1-1.6zM933.1 103.2l-3.3 2.6 3.3 2.6v-1l-1.1-1.6 1.1-1.6z" fill="#d0d0d0"/>
<text x="831.8" y="141.8" font-family="Liberation Sans,sans-serif" font-size="18.6" fill="#b2b2b2" stroke="#b2b2b2" stroke-width="0.45">A</text>
<rect x="846" y="126" width="1" height="18" fill="#a4a4a4"/>
<path d="M840 157.3h4.3v14.5h-1.3v-13.5h-1.7v13.5H840v-6.2a6.6 4.15 0 010-8.3z" fill="#b2b2b2"/>
</svg>

<!-- ===== bottom control bar ===== -->
<div class="ln" style="left:4px;top:618px;width:1px;height:35px"></div>
<div class="ln" style="left:4px;top:653px;width:936px;height:1px"></div>
<div class="dd" style="left:24px;width:140px;padding-left:5px">Adobe 宋体 Std</div>
<div class="dd" style="left:169px;width:80px;padding-left:5px">12 点</div>
<div class="dd" style="left:254px;width:140px;padding-left:5px">单倍间距</div>
<div class="ln" style="left:399px;top:623px;width:1px;height:25px;background:#464646"></div>
<div class="ln" style="left:780px;top:623px;width:1px;height:25px;background:#464646"></div>
<div class="a" style="left:406px;top:625px;width:27px;height:21px;background:#5a5a5a;border-radius:3px"></div>
<div class="a" style="left:437px;top:625px;width:27px;height:21px;background:#5a5a5a;border-radius:3px"></div>
<div class="ln" style="left:506px;top:618px;width:1px;height:35px"></div>
<div class="a" style="left:553px;top:625px;width:223px;height:21px;border:1px solid #7a7a7a"></div>
<div class="a" style="left:556px;top:629px;font-size:12px;line-height:14px;color:#f0f0f0">F:0</div>
<div class="a" style="left:617px;top:629px;font-size:12px;line-height:14px;color:#f0f0f0">H:0</div>
<div class="a" style="left:694px;top:629px;font-size:12px;line-height:14px;color:#f0f0f0">T:0</div>
<div class="a" style="left:814px;top:626px;width:130px;height:20px;border:1px solid #8a8a8a;background:#5c5c5c"></div>
<div class="a" style="left:884px;top:627px;font-size:12.5px;line-height:18px;color:#f0f0f0">无信息</div>

<!-- control bar icons -->
<svg class="a" style="left:0;top:618px" width="944" height="36" viewBox="0 618 944 36">
<g fill="#3e3e3e"><rect x="9" y="626" width="3" height="1"/><rect x="9" y="628" width="3" height="1"/><rect x="9" y="630" width="3" height="1"/><rect x="9" y="632" width="3" height="1"/><rect x="9" y="634" width="3" height="1"/><rect x="9" y="636" width="3" height="1"/><rect x="9" y="638" width="3" height="1"/><rect x="9" y="640" width="3" height="1"/><rect x="9" y="642" width="3" height="1"/><rect x="9" y="644" width="3" height="1"/><rect x="511" y="626" width="3" height="1"/><rect x="511" y="628" width="3" height="1"/><rect x="511" y="630" width="3" height="1"/><rect x="511" y="632" width="3" height="1"/><rect x="511" y="634" width="3" height="1"/><rect x="511" y="636" width="3" height="1"/><rect x="511" y="638" width="3" height="1"/><rect x="511" y="640" width="3" height="1"/><rect x="511" y="642" width="3" height="1"/><rect x="511" y="644" width="3" height="1"/></g>
<g fill="none" stroke="#d0d0d0" stroke-width="1.2">
<path d="M151.3 633.8l3.6 3.5 3.6-3.5M236.3 633.8l3.6 3.5 3.6-3.5M381 633.8l3.6 3.5 3.6-3.5"/>
</g>
<text x="414" y="635.2" font-family="Liberation Sans,sans-serif" font-size="8.4" fill="#8a8a8a">1</text>
<text x="414" y="641.8" font-family="Liberation Sans,sans-serif" font-size="8.4" fill="#8a8a8a">2</text>
<rect x="422.4" y="629" width="1" height="12.8" fill="#8a8a8a"/>
<rect x="443.5" y="628.6" width="12.4" height="15" fill="none" stroke="#8a8a8a" stroke-width="1"/>
<g fill="#8a8a8a"><rect x="445.6" y="631.3" width="1.4" height="1"/><rect x="445.6" y="634" width="1.4" height="1"/><rect x="445.6" y="636.8" width="1.4" height="1"/><rect x="445.6" y="639.5" width="1.4" height="1"/>
<rect x="448.6" y="631.3" width="5.4" height="1"/><rect x="448.6" y="634" width="5.4" height="1"/><rect x="448.6" y="636.8" width="5.4" height="1"/><rect x="448.6" y="639.5" width="5.4" height="1"/></g>
<g fill="#d2d2d2"><rect x="484" y="632" width="12" height="1"/><rect x="484" y="635" width="12" height="1"/><rect x="484" y="638" width="12" height="1"/></g>
<rect x="531.5" y="628.5" width="12" height="14.2" rx="1" fill="#474747" stroke="#c8c8c8" stroke-width="1.1"/>
<g fill="#c8c8c8"><rect x="533" y="631" width="9" height="1"/><rect x="533" y="633" width="9" height="1"/><rect x="533" y="635" width="9" height="1"/><rect x="537" y="631" width="1" height="8"/><path d="M535.3 637.8h4.4l-2.2 3.2z"/>
<rect x="533" y="637.2" width="1.2" height="1"/><rect x="540.8" y="637.2" width="1.2" height="1"/><rect x="533" y="639.2" width="2.2" height="1"/><rect x="539.8" y="639.2" width="2.2" height="1"/></g>
<text x="793.7" y="637.3" font-family="Liberation Serif,serif" font-size="12.8" fill="#c6c6c6" stroke="#c6c6c6" stroke-width="0.4" transform="translate(-79 0) scale(1.1 1)">T</text>
<g fill="#c6c6c6"><rect x="789" y="641" width="18" height="3"/><rect x="789.00" y="638.8" width="1.3" height="2.6"/><rect x="791.55" y="638.8" width="1.3" height="2.6"/><rect x="794.1" y="638.8" width="1.3" height="2.6"/><rect x="796.65" y="638.8" width="1.3" height="2.6"/><rect x="799.2" y="638.8" width="1.3" height="2.6"/><rect x="801.75" y="638.8" width="1.3" height="2.6"/><rect x="804.3" y="638.8" width="1.3" height="2.6"/><rect x="806.85" y="638.8" width="1.3" height="2.6"/></g>
</svg>

<!-- window border -->
<div class="a" style="left:0;top:0;width:944px;height:658px;border:1px solid #3a3a3a;border-radius:4px 4px 0 0;pointer-events:none"></div>
</div>
</body>
</html>
